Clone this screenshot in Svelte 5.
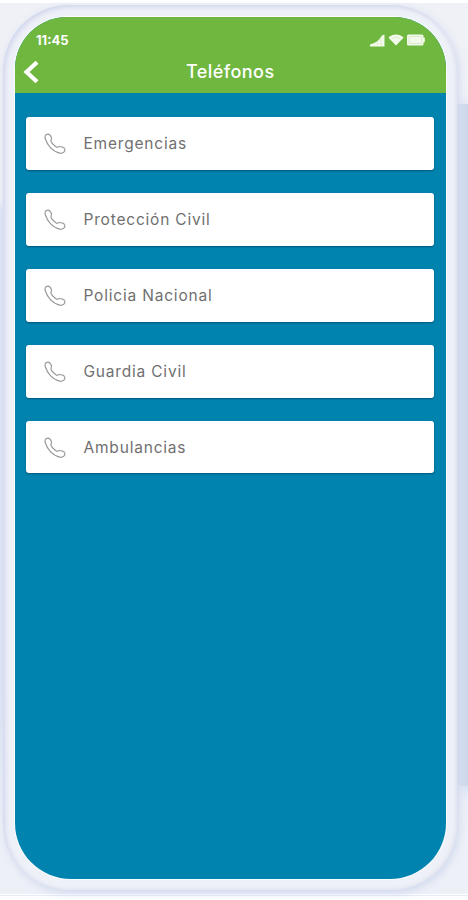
<script>
  const title = "Teléfonos";
  const time = "11:45";

  const contacts = [
    "Emergencias",
    "Protección Civil",
    "Policia Nacional",
    "Guardia Civil",
    "Ambulancias",
  ];
</script>

<div class="backdrop">
  <div class="side-panel"></div>
  <div class="phone">
    <main class="screen">
      <header>
        <div class="status">
          <span class="time">{time}</span>
          <div class="status-icons">
            <svg width="15" height="13" viewBox="0 0 15 13">
              <path d="M0 12.5V10.5L4 9L7 7.5L10 4.500L12 1.500L14.500 .500V12.500z" />
              <path class="cut" d="M4 9.500V11M7.500 8V11M11 5V11" />
            </svg>
            <svg width="16" height="12" viewBox="0 0 16 12">
              <path d="M8 11.500L.5 3.800C4.500-.6 11.500-.6 15.500 3.800z" />
              <path class="cut" d="M3.600 4.800Q8 1.500 12.400 4.800" />
            </svg>
            <svg width="18" height="12" viewBox="0 0 18 12">
              <rect x="0" y="0.500" width="16.500" height="11" rx="1.500" />
              <rect x="16" y="3.500" width="1.800" height="5" rx="0.800" />
              <path class="cut" d="M2 2.500H14.500V9.500H2z" />
            </svg>
          </div>
        </div>
        <div class="nav">
          <button class="back" aria-label="Volver">
            <svg width="16" height="24" viewBox="0 0 16 24">
              <path d="M14 2.200L3.500 12L14 21.800" />
            </svg>
          </button>
          <h1>{title}</h1>
        </div>
      </header>

      <ul>
        {#each contacts as contact}
          <li>
            <svg class="call" width="22" height="22" viewBox="0 0 22 22">
              <path d="M1.200 5.500C.6 3.800 1.500 1.500 3.500 1.200C5.500 .8 6.400 2.200 7.300 4.300C8.300 6.600 6 7.200 7.300 9.200C8.600 11.200 10.200 12.800 12.300 14.100C13.600 14.900 14.300 13.200 16 13.500C18 13.800 20.900 14.900 20.900 16.700C20.900 19.400 18.300 20.600 15.900 20.200C8.900 18.700 3.200 12.200 1.200 5.500Z" />
            </svg>
            <span>{contact}</span>
          </li>
        {/each}
      </ul>
    </main>
  </div>
</div>

<style>
  :global(body) {
    background: #fff;
  }

  .backdrop {
    position: relative;
    box-sizing: border-box;
    width: 468px;
    height: 900px;
    padding: 5px 11px 10px 3px;
    overflow: hidden;
    background: linear-gradient(#fff 0 3px, #f0f1f7 3px 200px, #dfe4f4 210px 700px, #edf0f7 820px 894px, #fff 894px 895px, #e5eaf6 895px 896px, #fff 896px);
  }

  .side-panel {
    position: absolute;
    top: 104px;
    right: -6px;
    width: 18px;
    height: 682px;
    border-radius: 0 0 6px 6px;
    background: linear-gradient(to right, #d8e1f2, #ced8eb 60%);
    box-shadow: 0 2px 14px #cbd8f3;
  }

  .phone {
    position: relative;
    box-sizing: border-box;
    height: 885px;
    padding: 12px 11.500px 11px 12px;
    border-radius: 66px;
    background: #eff1f8;
    box-shadow: inset 2px 2px 5px #cfd5ec, inset -2px -1px 4px #e5e7f0, 2px 3px 8px #d0d9ee;
  }

  .screen {
    height: 862px;
    overflow: hidden;
    border-radius: 52px 52px 56px 56px;
    background: #0083ae;
    box-shadow: 0 0 0 1px #fafcff;
    font-family: "Inter", "Liberation Sans", sans-serif;
  }

  header {
    height: 76px;
    background: #70b740;
    color: #fff;
  }

  .status {
    display: flex;
    align-items: center;
    justify-content: space-between;
    box-sizing: border-box;
    height: 32px;
    padding: 14px 20.500px 0 21px;
  }

  .time {
    font-size: 13px;
    font-weight: 700;
    line-height: 16px;
  }

  .status-icons {
    display: flex;
    align-items: center;
    gap: 3px;
  }

  .status-icons svg {
    fill: #f3faeb;
  }

  .status-icons .cut {
    fill: none;
    stroke: #d3e9c0;
    stroke-width: 0.800;
  }

  .nav {
    display: grid;
    grid-template-columns: 36px 1fr 36px;
    align-items: center;
    height: 44px;
  }

  .back {
    display: flex;
    padding: 1px 0 0 8px;
    border: 0;
    background: none;
  }

  .back path {
    fill: none;
    stroke: #fff;
    stroke-width: 4.200;
  }

  h1 {
    margin: 0;
    padding-top: 1px;
    font-size: 18px;
    font-weight: 500;
    line-height: 24px;
    letter-spacing: 0.450px;
    text-align: center;
  }

  ul {
    display: flex;
    flex-direction: column;
    gap: 23px;
    margin: 0;
    padding: 24px 11.500px 0 11px;
    list-style: none;
  }

  li {
    display: flex;
    align-items: center;
    gap: 17.500px;
    box-sizing: border-box;
    height: 52.900px;
    padding: 1px 0 0 18px;
    border-radius: 3px;
    background: #fff;
    box-shadow: 0 1px 2px rgba(0, 45, 75, 0.5);
    color: #707070;
    font-size: 15.500px;
    line-height: 20px;
    letter-spacing: 0.800px;
  }

  .call {
    flex-shrink: 0;
    fill: none;
    stroke: #9a9a9a;
    stroke-width: 1.200;
  }
</style>
